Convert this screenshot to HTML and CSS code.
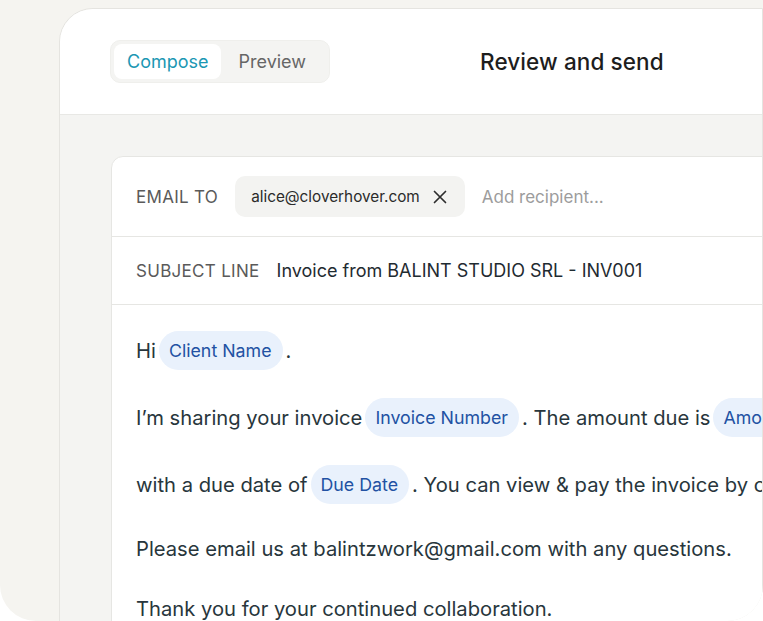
FILE: index.html
```html
<!DOCTYPE html>
<html lang="en">
<head>
<meta charset="utf-8">
<title>Review and send</title>
<link rel="stylesheet" href="styles.css">
</head>
<body>
<!--outer frame-->
<div class="frame">
    <div class="window">
        <!--top bar-->
        <header class="topbar">
            <div class="tabs">
                <button class="tab active">Compose</button>
                <button class="tab">Preview</button>
            </div>
            <h1 class="title">Review and send</h1>
        </header>
        <!--email editor-->
        <main class="canvas">
            <section class="mail">
                <div class="row">
                    <span class="label">Email to</span>
                    <span class="recipient">alice@cloverhover.com
                        <svg class="remove" width="14" height="14" viewBox="0 0 14 14"><path d="M1.5 1.5l11 11M12.5 1.5l-11 11" stroke="#2d2d2d" stroke-width="1.7" stroke-linecap="round"/></svg>
                    </span>
                    <span class="placeholder">Add recipient...</span>
                </div>
                <div class="row subject">
                    <span class="label">Subject line</span>
                    <span class="subject-text">Invoice from BALINT STUDIO SRL - INV001</span>
                </div>
                <div class="message">
                    <p class="line">Hi<span class="var">Client Name</span>.</p>
                    <div class="para">
                        <p class="line">I’m sharing your invoice<span class="var">Invoice Number</span>. The amount due is<span class="var">Amount</span></p>
                        <p class="line">with a due date of<span class="var">Due Date</span>. You can view &amp; pay the invoice by clicking the link below.</p>
                    </div>
                    <p class="line plain">Please email us at balintzwork@gmail.com with any questions.</p>
                    <p class="line plain">Thank you for your continued collaboration.</p>
                </div>
            </section>
        </main>
    </div>
</div>
</body>
</html>
```

FILE: styles.css
```css
/*reset*/
body,div,p,h1,section,header,main{margin:0; padding:0;}
body{background:#fff; font-family:Inter, "Noto Sans", sans-serif;}
button{font-family:inherit; border:none; cursor:pointer;}

/*frame + window*/
.frame{width:763px; height:621px; overflow:hidden; background:#f5f4f0; border-radius:0 0 36px 36px;}
.window{margin:8px 0 0 59px; width:702px; height:700px; border:1px solid #e5e4e0; border-radius:34px 0 0 0; overflow:hidden; background:#f4f4f2;}

/*top bar*/
.topbar{height:105px; background:#fff; border-bottom:1px solid #e8e8e5; display:flex; align-items:center; padding-left:50px; gap:150px;}
.tabs{display:flex; padding:3px; background:#f4f4f2; border-radius:10px; border:1px solid #efefec;}
.tab{height:35px; font-size:18px; color:#666; background:none; border-radius:8px;}
.tab.active{background:#fff; color:#1b97b3; padding:0 12px 0 13px;}
.tab + .tab{padding:0 20px 0 18px;}
.title{font-size:22.5px; font-weight:500; color:#1d1d1d; letter-spacing:0.1px;}

/*mail card*/
.canvas{padding:41px 0 0 51px;}
.mail{width:900px; height:600px; background:#fff; border:1px solid #e6e6e3; border-radius:12px 0 0 0;}
.row{display:flex; align-items:center; gap:17px; padding-left:24px; height:79px; border-bottom:1px solid #e6e6e3;}
.row.subject{height:67px;}
.label{font-size:17px; color:#5a5a5a; text-transform:uppercase; letter-spacing:0.3px;}
.recipient{display:flex; align-items:center; gap:13px; height:41px; padding:0 18px 0 16px; background:#f3f3f1; border-radius:10px; font-size:15.3px; color:#2a2a2a;}
.placeholder{font-size:17px; color:#9c9c9c;}
.subject-text{font-size:18px; color:#1f2b31;}

/*message body*/
.message{display:flex; flex-direction:column; gap:24px; padding:24px 24px;}
.para{display:flex; flex-direction:column; gap:24px;}
.line{display:flex; align-items:center; height:43px; font-size:20.2px; color:#28363c; white-space:nowrap;}
.line.plain{height:36px;}
.var{display:inline-flex; align-items:center; height:39px; padding:0 11px 0 10px; margin:0 3px; background:#e9f1fc; color:#2251a3; font-size:17.8px; border-radius:20px;}
```
